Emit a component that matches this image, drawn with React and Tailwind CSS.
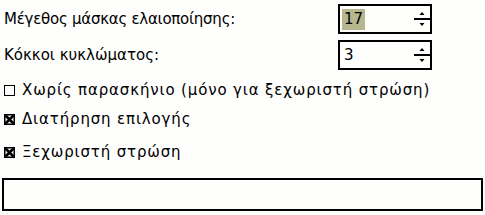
import React from 'react';

const SpinBox = ({ value, selected }) => (
    <div className="relative w-[94px] h-[30px] border-2 border-black bg-[#fefefd] flex items-center">
        <span className={selected ? 'ml-[2px] px-[2px] bg-[#b6b78f] leading-[21px]' : 'ml-[4px] leading-[21px]'}>
            {value}
        </span>
        <div className="absolute right-0 top-0 h-full w-[16px] flex flex-col items-center">
            <svg width="16" height="26" viewBox="0 0 16 26">
                <path d="M8 6 L10.5 9 L5.5 9 Z" fill="#000" />
                <rect x="0" y="12" width="16" height="2" fill="#000" />
                <path d="M5.5 17 L10.5 17 L8 20 Z" fill="#000" />
            </svg>
        </div>
    </div>
);

const Check = ({ checked }) => (
    <svg width="11" height="11" viewBox="0 0 11 11" className="shrink-0">
        <rect x="0.5" y="0.5" width="10" height="10" fill="#fefefd" stroke="#000" />
        {checked && (
            <>
                <rect x="1" y="1" width="9" height="9" fill="none" stroke="#000" strokeWidth="1" />
                <path d="M1.5 1.5 L9.5 9.5 M9.5 1.5 L1.5 9.5" stroke="#000" strokeWidth="2.6" />
            </>
        )}
    </svg>
);

const CheckRow = ({ checked, label, className }) => (
    <div className={`flex items-center gap-[7px] pl-[4px] h-[24px] ${className}`}>
        <Check checked={checked} />
        <span className="tracking-[0.85px]">{label}</span>
    </div>
);

const App = () => {
    return (
        <div className="w-[485px] h-[215px] overflow-hidden bg-[#fefefd] text-black text-[15px] font-['DejaVu_Sans',sans-serif]">
            <div className="flex items-center mt-[4px] h-[30px]">
                <span className="pl-[4px] w-[338px] tracking-[-0.25px]">Μέγεθος μάσκας ελαιοποίησης:</span>
                <SpinBox value="17" selected />
            </div>
            <div className="flex items-center mt-[6px] h-[30px]">
                <span className="pl-[4px] w-[338px]">Κόκκοι κυκλώματος:</span>
                <SpinBox value="3" />
            </div>
            <CheckRow className="mt-[8px]" label="Χωρίς παρασκήνιο (μόνο για ξεχωριστή στρώση)" />
            <CheckRow className="mt-[5px]" checked label="Διατήρηση επιλογής" />
            <CheckRow className="mt-[9px]" checked label="Ξεχωριστή στρώση" />
            <div className="mt-[14px] mx-[2px] h-[33px] border-2 border-black bg-[#fefefd]"></div>
        </div>
    );
};

export default App;
